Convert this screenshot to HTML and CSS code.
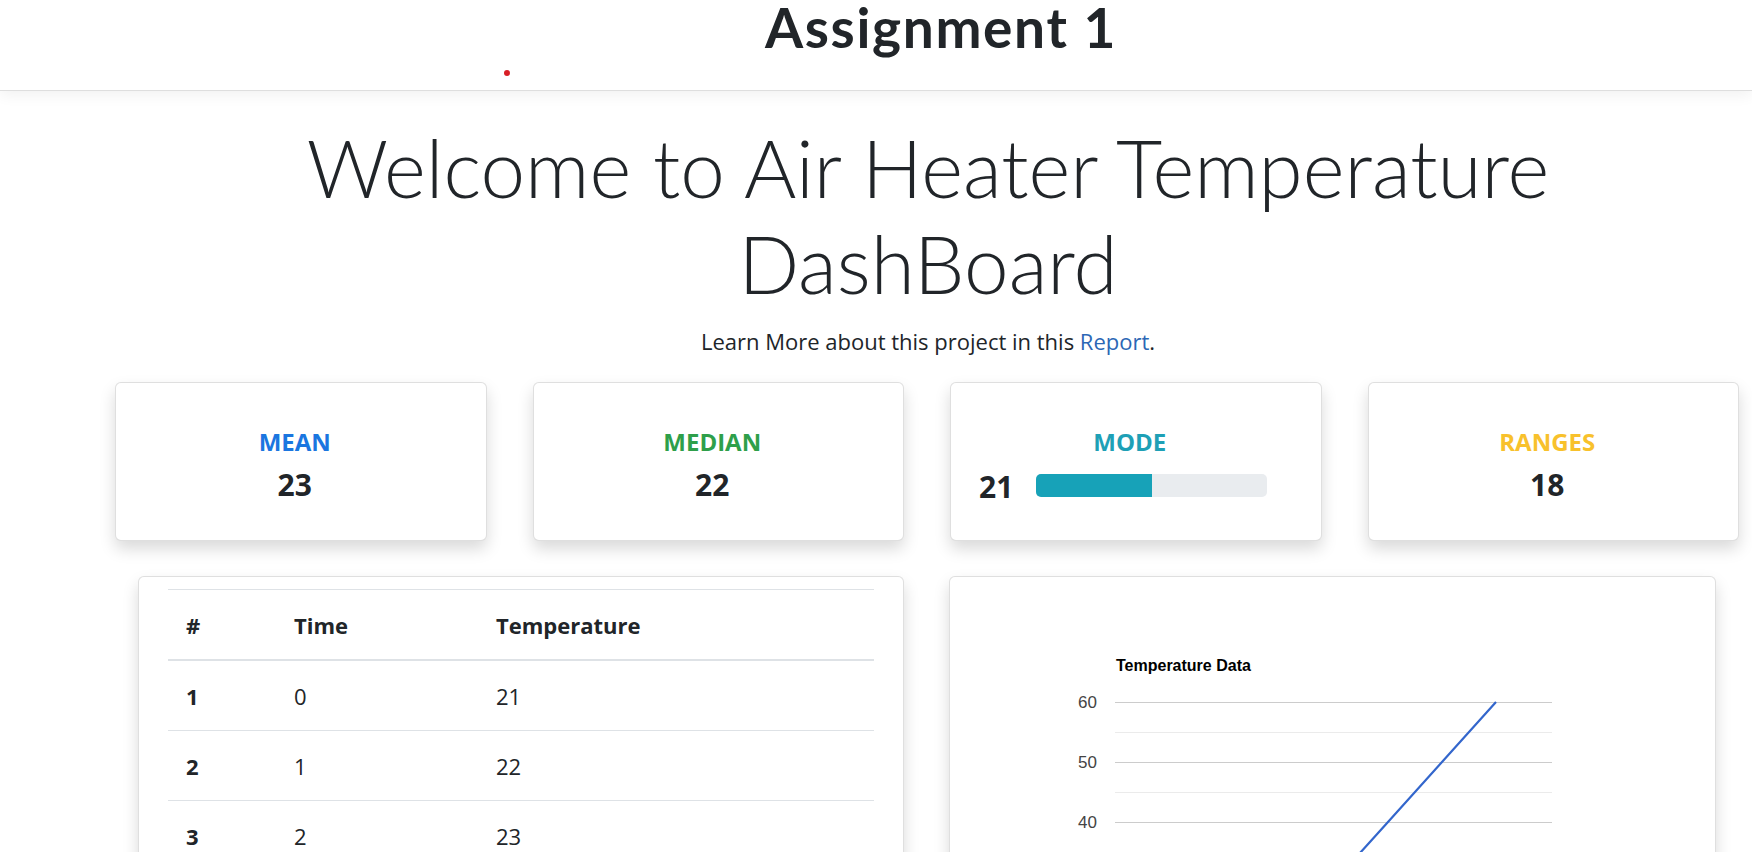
FILE: index.html
```html
<!DOCTYPE html>
<html lang="en">
<head>
<meta charset="utf-8">
<title>Assignment 1</title>
<link rel="stylesheet" href="styles.css">
</head>
<body>
<header class="navbar">
  <h1 class="brand">Assignment 1</h1>
  <span class="dot"></span>
</header>
<main class="main">
  <h2 class="display">Welcome to Air Heater Temperature DashBoard</h2>
  <p class="lead">Learn More about this project in this <a href="#">Report</a>.</p>

  <section class="stats">
    <div class="stat-card">
      <div class="stat-label mean">MEAN</div>
      <div class="stat-value">23</div>
    </div>
    <div class="stat-card">
      <div class="stat-label median">MEDIAN</div>
      <div class="stat-value">22</div>
    </div>
    <div class="stat-card">
      <div class="stat-label mode">MODE</div>
      <div class="stat-row">
        <span class="stat-value">21</span>
        <div class="progress"><div class="progress-bar" style="width:50%"></div></div>
      </div>
    </div>
    <div class="stat-card">
      <div class="stat-label ranges">RANGES</div>
      <div class="stat-value">18</div>
    </div>
  </section>

  <section class="panels">
    <div class="panel table-panel">
      <table class="data-table">
        <thead>
          <tr><th class="c1">#</th><th class="c2">Time</th><th>Temperature</th></tr>
        </thead>
        <tbody>
          <tr><th class="c1">1</th><td>0</td><td>21</td></tr>
          <tr><th class="c1">2</th><td>1</td><td>22</td></tr>
          <tr><th class="c1">3</th><td>2</td><td>23</td></tr>
          <tr><th class="c1">4</th><td>3</td><td>24</td></tr>
          <tr><th class="c1">5</th><td>4</td><td>26</td></tr>
        </tbody>
      </table>
    </div>
    <div class="panel chart-panel">
      <svg class="chart" width="765" height="420" xmlns="http://www.w3.org/2000/svg">
        <text x="166" y="94" class="chart-title">Temperature Data</text>
        <g class="grid-minor">
          <line x1="165" y1="155.5" x2="602" y2="155.5"/>
          <line x1="165" y1="215.5" x2="602" y2="215.5"/>
          <line x1="165" y1="275.5" x2="602" y2="275.5"/>
          <line x1="165" y1="335.5" x2="602" y2="335.5"/>
        </g>
        <g class="grid-major">
          <line x1="165" y1="125.5" x2="602" y2="125.5"/>
          <line x1="165" y1="185.5" x2="602" y2="185.5"/>
          <line x1="165" y1="245.5" x2="602" y2="245.5"/>
          <line x1="165" y1="305.5" x2="602" y2="305.5"/>
          <line x1="165" y1="365.5" x2="602" y2="365.5"/>
        </g>
        <g class="axis-labels">
          <text x="147" y="131">60</text>
          <text x="147" y="191">50</text>
          <text x="147" y="251">40</text>
          <text x="147" y="311">30</text>
          <text x="147" y="371">20</text>
        </g>
        <polyline class="series" points="546,125 438,245 335,359 230,365"/>
      </svg>
    </div>
  </section>
</main>
</body>
</html>
```

FILE: styles.css
```css
* {
  box-sizing: border-box;
}

html,
body {
  margin: 0;
  padding: 0;
}

body {
  font-family: "Open Sans", "Noto Sans", "Liberation Sans", sans-serif;
  color: #212529;
  background: #fff;
  overflow: hidden;
}

.navbar {
  position: relative;
  z-index: 2;
  height: 91px;
  padding: 7px 0 0 130px;
  display: flex;
  justify-content: center;
  background: #fff;
  border-bottom: 1px solid #dedede;
  box-shadow: 0 4px 14px rgba(0, 0, 0, 0.06);
}

.brand {
  margin: 0;
  font-family: Lato, "Open Sans", sans-serif;
  font-size: 55px;
  line-height: 40px;
  font-weight: 700;
  letter-spacing: 0.03em;
}

.dot {
  position: absolute;
  left: 504px;
  top: 70px;
  width: 6px;
  height: 6px;
  border-radius: 50%;
  background: #d81f26;
}

.main {
  padding-left: 104px;
}

.display {
  max-width: 1300px;
  margin: 28px auto 0;
  font-family: Lato, "Open Sans", sans-serif;
  font-size: 80px;
  line-height: 96px;
  font-weight: 300;
  text-align: center;
}

.lead {
  margin: 15px 0 0;
  font-size: 22px;
  line-height: 30px;
  text-align: center;
}

.lead a {
  color: #2c67b5;
  text-decoration: none;
}

.stats {
  display: grid;
  grid-template-columns: repeat(4, 1fr);
  gap: 46px;
  padding: 0 13px 0 11px;
  margin-top: 26px;
}

.stat-card {
  height: 159px;
  padding: 44px 12px 0 0;
  text-align: center;
  background: #fff;
  border: 1px solid rgba(0, 0, 0, 0.125);
  border-radius: 6px;
  box-shadow: 0 0.5rem 1rem rgba(0, 0, 0, 0.15);
}

.stat-label {
  font-size: 24px;
  line-height: 29px;
  font-weight: 700;
}

.mean { color: #1a76e0; }
.median { color: #2e9f4a; }
.mode { color: #1ea0b6; }
.ranges { color: #f8c12c; }

.stat-value {
  margin-top: 11px;
  font-size: 30px;
  line-height: 36px;
  font-weight: 700;
}

.stat-row {
  display: flex;
  align-items: center;
  gap: 23px;
  margin-top: 9px;
  padding-left: 28px;
}

.stat-row .stat-value {
  margin-top: 4px;
}

.progress {
  width: 231px;
  height: 23px;
  background: #e9ecef;
  border-radius: 5px;
  overflow: hidden;
}

.progress-bar {
  height: 100%;
  background: #17a2b8;
}

.panels {
  display: grid;
  grid-template-columns: 1fr 1fr;
  gap: 45px;
  padding: 0 36px 0 34px;
  margin-top: 35px;
}

.panel {
  background: #fff;
  border: 1px solid rgba(0, 0, 0, 0.125);
  border-radius: 6px;
  box-shadow: 0 0.5rem 1rem rgba(0, 0, 0, 0.15);
}

.table-panel {
  padding: 12px 29px 20px;
}

.data-table {
  width: 100%;
  border-collapse: separate;
  border-spacing: 0;
  font-size: 22px;
  line-height: 33px;
}

.data-table th,
.data-table td {
  padding: 19px 18px 17px;
  text-align: left;
  vertical-align: top;
  border-bottom: 1px solid #dee2e6;
}

.data-table th {
  font-weight: 700;
}

.data-table td {
  font-weight: 400;
}

.data-table thead th {
  border-top: 1px solid #dee2e6;
  border-bottom: 2px solid #dee2e6;
}

.data-table .c1 {
  width: 108px;
}

.data-table .c2 {
  width: 202px;
}

.chart {
  display: block;
  font-family: "Liberation Sans", Arial, sans-serif;
}

.chart-title {
  font-size: 16px;
  font-weight: 700;
  fill: #000;
}

.grid-major line {
  stroke: #cccccc;
  stroke-width: 1;
}

.grid-minor line {
  stroke: #ebebeb;
  stroke-width: 1;
}

.axis-labels text {
  font-size: 17px;
  fill: #444;
  text-anchor: end;
}

.series {
  fill: none;
  stroke: #3366cc;
  stroke-width: 2.2;
}
```
